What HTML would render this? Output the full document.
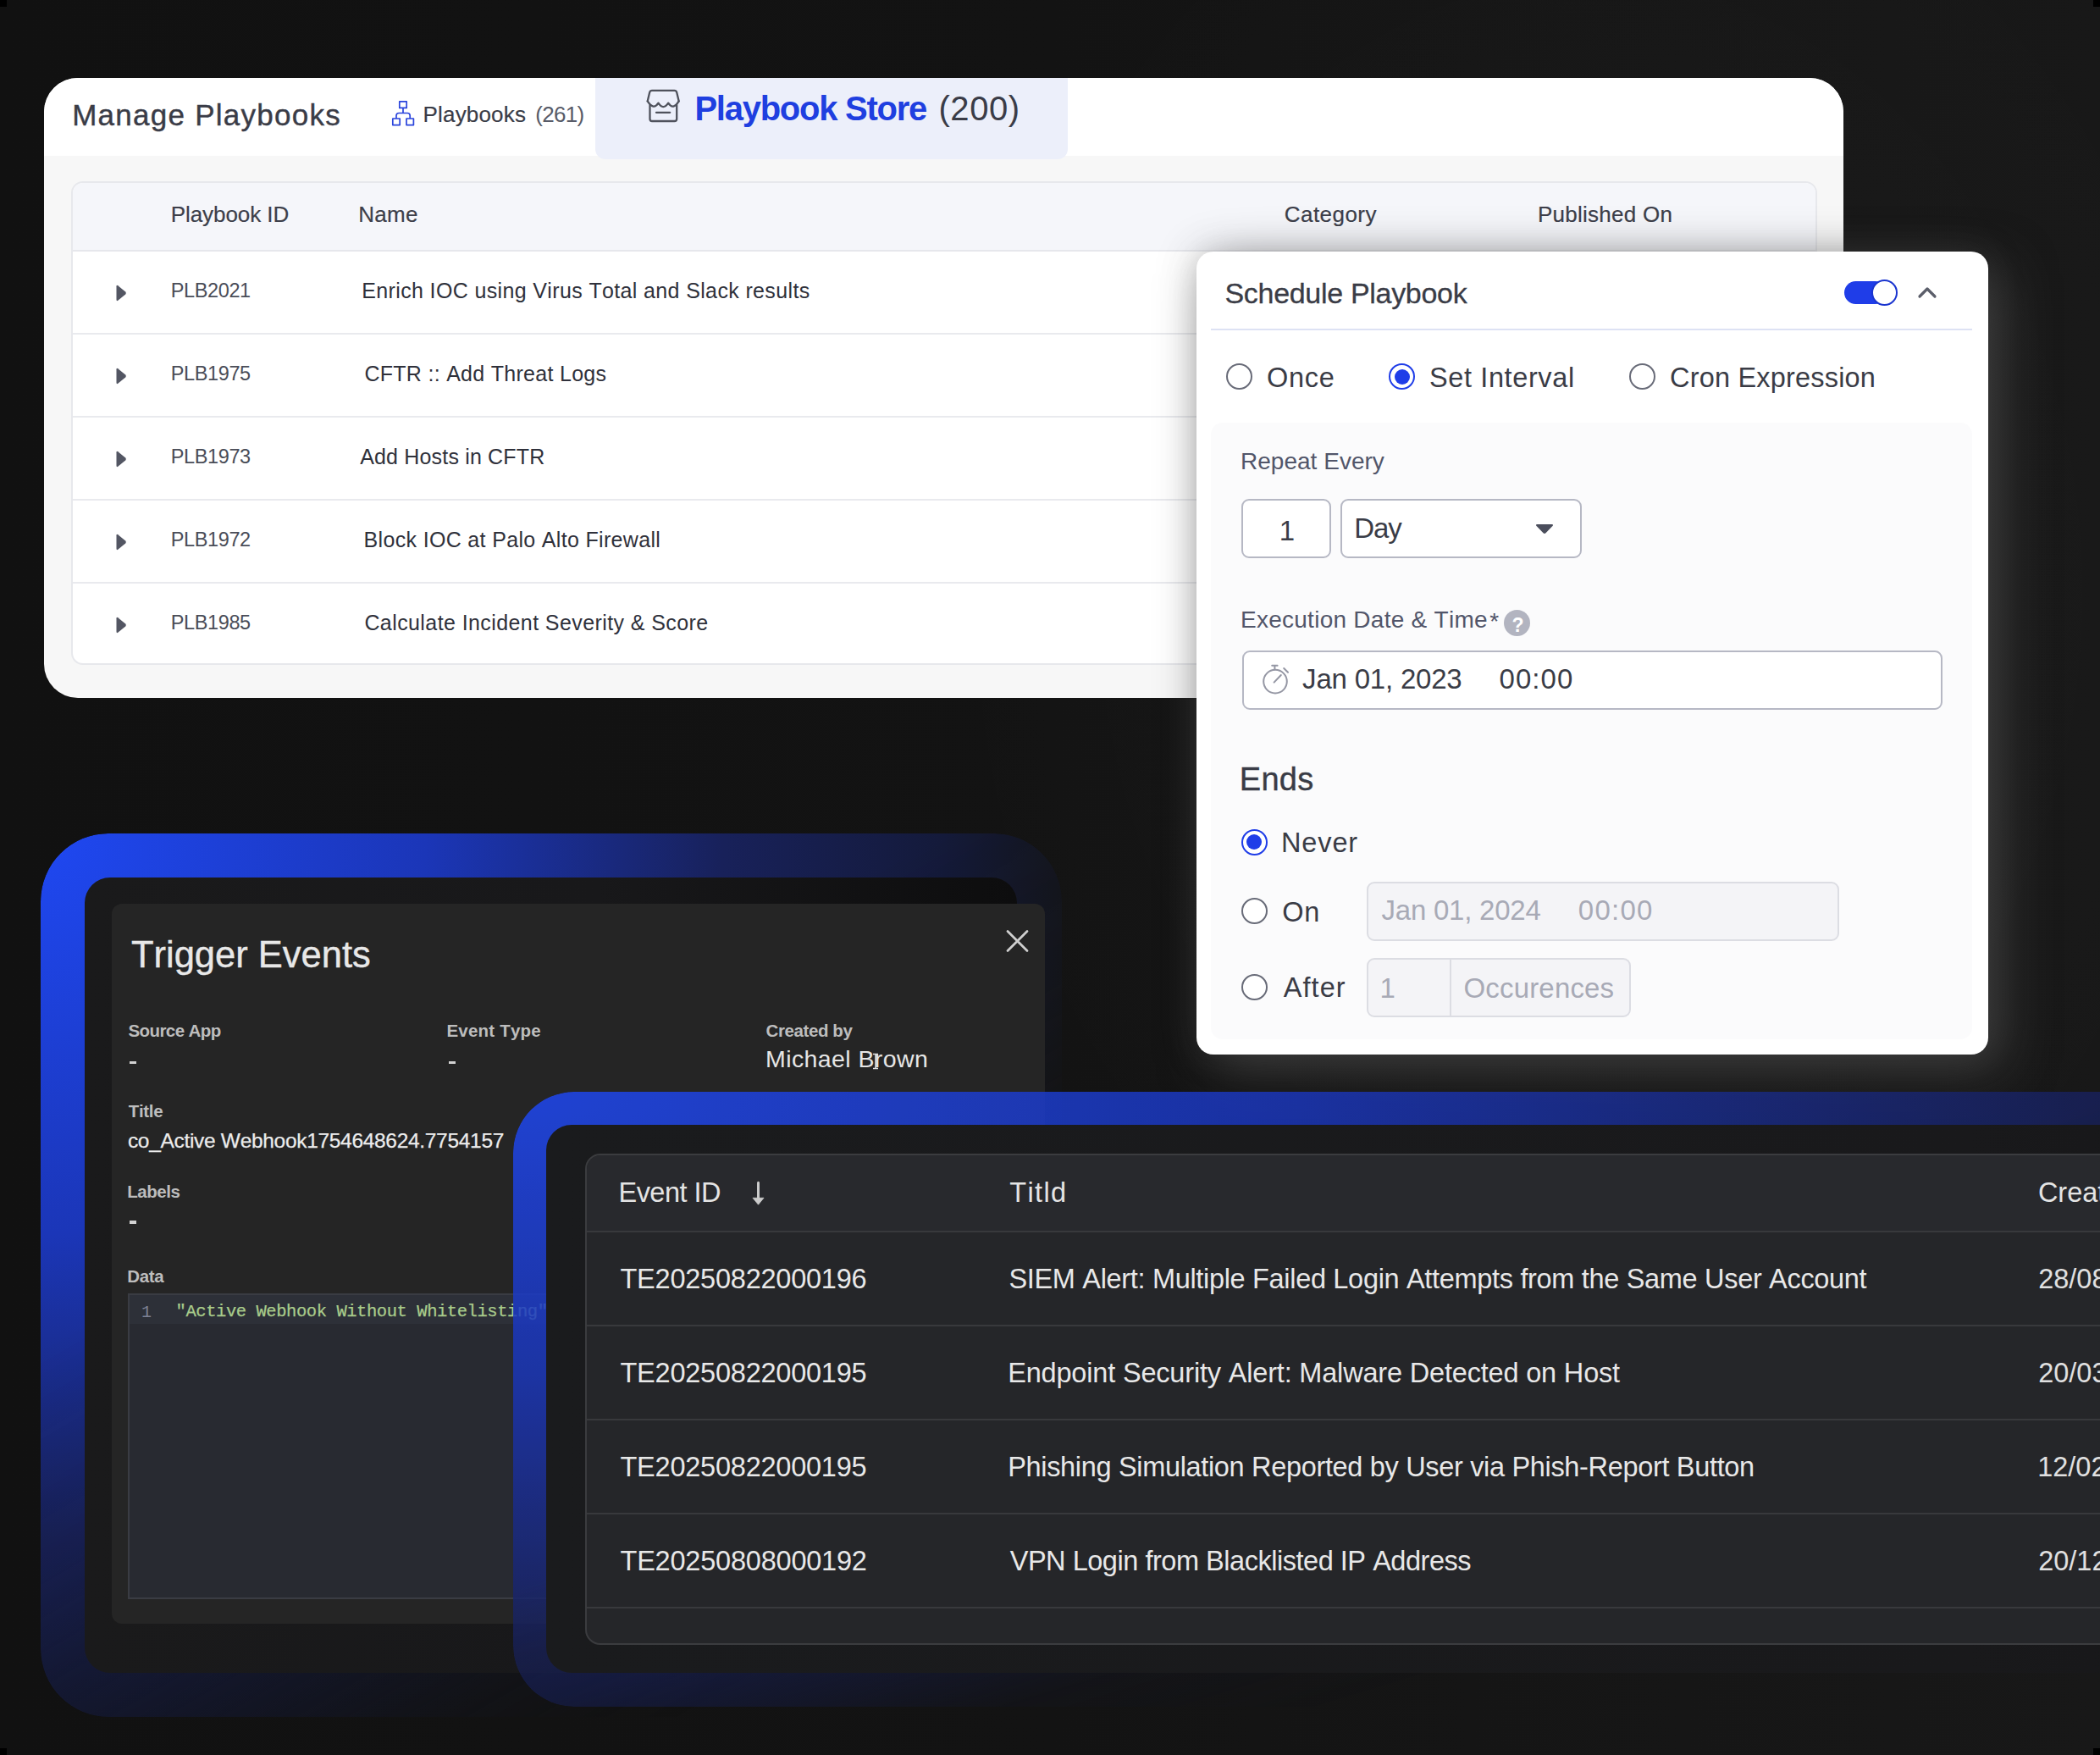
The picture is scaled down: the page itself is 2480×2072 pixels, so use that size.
<!DOCTYPE html>
<html><head><meta charset="utf-8">
<style>
*{margin:0;padding:0;box-sizing:border-box;}
html,body{width:2480px;height:2072px;overflow:hidden;}
body{position:relative;background:#131313;font-family:"Liberation Sans",sans-serif;font-kerning:none;}
.a{position:absolute;}
.t{position:absolute;white-space:nowrap;line-height:1;font-kerning:none;}
svg{position:absolute;overflow:visible;}
</style></head><body>
<div class="a" style="left:0px;top:0px;width:2480px;height:2072px;background:linear-gradient(90deg,#111111 0%,#131313 50%,#181818 100%);"></div>
<div class="a" style="left:0;top:0;width:2480px;height:2072px;background:radial-gradient(ellipse 800px 1000px at 1880px 700px, rgba(255,255,255,0.02) 0%, rgba(255,255,255,0.01) 50%, rgba(255,255,255,0) 100%);"></div>
<div class="a" style="left:52px;top:92px;width:2125px;height:732px;border-radius:40px;background:#f7f7f7;overflow:hidden;"><div class="a" style="left:0;top:0;width:2125px;height:92px;background:#fff;"></div><div class="a" style="left:651px;top:0;width:558px;height:96px;background:#eceffa;border-radius:0 0 12px 12px;"></div></div>
<div class="a" style="left:84px;top:214px;width:2062px;height:571px;background:#fff;border:2px solid #e7e8ec;border-radius:14px;overflow:hidden;"><div class="a" style="left:0;top:0;width:2062px;height:81px;background:#f5f6fa;border-bottom:2px solid #e6e7ec;"></div><div class="a" style="left:0;top:81px;width:2062px;height:98px;border-bottom:2px solid #e9eaee;"></div><div class="a" style="left:0;top:179px;width:2062px;height:98px;border-bottom:2px solid #e9eaee;"></div><div class="a" style="left:0;top:277px;width:2062px;height:98px;border-bottom:2px solid #e9eaee;"></div><div class="a" style="left:0;top:375px;width:2062px;height:98px;border-bottom:2px solid #e9eaee;"></div></div>
<div class="t" style="left:85.2px;top:117.8px;font-size:35px;color:#3a3c47;font-weight:400;letter-spacing:1.26px;font-family:'Liberation Sans',sans-serif;-webkit-text-stroke:0.4px #3a3c47;">Manage Playbooks</div>
<svg style="left:462px;top:118px" width="28" height="32" viewBox="0 0 28 32"><g fill="none" stroke="#2a44dc" stroke-width="1.7" stroke-linejoin="round"><rect x="9.8" y="1.8" width="8.4" height="7.6"/><rect x="1.8" y="22" width="8.4" height="7.6"/><rect x="18" y="22" width="8.4" height="7.6"/><path d="M14 9.4V15.5M6 22V18.6Q6 15.5 9.1 15.5H19.1Q22.2 15.5 22.2 18.6V22"/></g></svg>
<div class="t" style="left:499.6px;top:121.9px;font-size:26px;color:#3a3c47;font-weight:400;letter-spacing:0.17px;font-family:'Liberation Sans',sans-serif;-webkit-text-stroke:0.2px #3a3c47;">Playbooks</div>
<div class="t" style="left:632.2px;top:121.9px;font-size:26px;color:#585b68;font-weight:400;letter-spacing:-0.68px;font-family:'Liberation Sans',sans-serif;">(261)</div>
<svg style="left:762px;top:104px" width="44" height="44" viewBox="0 0 44 44"><g fill="none" stroke="#4f525c" stroke-width="2.3" stroke-linecap="round" stroke-linejoin="round"><path d="M2.7 15.4L5.2 5Q5.8 2.8 8 2.8H34.4Q36.6 2.8 37.2 5L39.7 15.4"/><path d="M2.7 15.4Q9.8 26.5 15.5 17.7Q21.3 26.5 27.2 17.7Q33 26.5 39.7 15.4"/><path d="M5.5 20.2V36.5Q5.5 39 8 39H34.5Q37.2 39 37.2 36.5V20.2"/><path d="M13 28.8H29.2"/></g></svg>
<div class="t" style="left:820.4px;top:108.3px;font-size:40px;color:#1f3fe0;font-weight:700;letter-spacing:-1.26px;font-family:'Liberation Sans',sans-serif;">Playbook Store</div>
<div class="t" style="left:1108.5px;top:108.3px;font-size:40px;color:#3a3c47;font-weight:400;letter-spacing:0.54px;font-family:'Liberation Sans',sans-serif;">(200)</div>
<div class="t" style="left:201.7px;top:239.8px;font-size:26px;color:#3d3f4a;font-weight:400;letter-spacing:-0.07px;font-family:'Liberation Sans',sans-serif;-webkit-text-stroke:0.2px #3d3f4a;">Playbook ID</div>
<div class="t" style="left:423.2px;top:239.8px;font-size:26px;color:#3d3f4a;font-weight:400;letter-spacing:0.28px;font-family:'Liberation Sans',sans-serif;-webkit-text-stroke:0.2px #3d3f4a;">Name</div>
<div class="t" style="left:1516.8px;top:239.8px;font-size:26px;color:#3d3f4a;font-weight:400;letter-spacing:0.45px;font-family:'Liberation Sans',sans-serif;-webkit-text-stroke:0.2px #3d3f4a;">Category</div>
<div class="t" style="left:1816.0px;top:239.8px;font-size:26px;color:#3d3f4a;font-weight:400;letter-spacing:0.25px;font-family:'Liberation Sans',sans-serif;-webkit-text-stroke:0.2px #3d3f4a;">Published On</div>
<svg style="left:135px;top:335.2px" width="16" height="22" viewBox="0 0 16 22"><path d="M2.5 3.2Q2.5 1 4.3 2.3L13.2 9.6Q14.6 11 13.2 12.4L4.3 19.7Q2.5 21 2.5 18.8Z" fill="#535663"/></svg>
<div class="t" style="left:201.8px;top:331.8px;font-size:23.5px;color:#4a4d58;font-weight:400;letter-spacing:-0.39px;font-family:'Liberation Sans',sans-serif;">PLB2021</div>
<div class="t" style="left:427.3px;top:330.6px;font-size:25px;color:#2f313b;font-weight:400;letter-spacing:0.36px;font-family:'Liberation Sans',sans-serif;">Enrich IOC using Virus Total and Slack results</div>
<svg style="left:135px;top:433.2px" width="16" height="22" viewBox="0 0 16 22"><path d="M2.5 3.2Q2.5 1 4.3 2.3L13.2 9.6Q14.6 11 13.2 12.4L4.3 19.7Q2.5 21 2.5 18.8Z" fill="#535663"/></svg>
<div class="t" style="left:201.8px;top:429.8px;font-size:23.5px;color:#4a4d58;font-weight:400;letter-spacing:-0.39px;font-family:'Liberation Sans',sans-serif;">PLB1975</div>
<div class="t" style="left:430.4px;top:428.6px;font-size:25px;color:#2f313b;font-weight:400;letter-spacing:0.29px;font-family:'Liberation Sans',sans-serif;">CFTR :: Add Threat Logs</div>
<svg style="left:135px;top:531.2px" width="16" height="22" viewBox="0 0 16 22"><path d="M2.5 3.2Q2.5 1 4.3 2.3L13.2 9.6Q14.6 11 13.2 12.4L4.3 19.7Q2.5 21 2.5 18.8Z" fill="#535663"/></svg>
<div class="t" style="left:201.8px;top:527.8px;font-size:23.5px;color:#4a4d58;font-weight:400;letter-spacing:-0.39px;font-family:'Liberation Sans',sans-serif;">PLB1973</div>
<div class="t" style="left:425.2px;top:526.5px;font-size:25px;color:#2f313b;font-weight:400;letter-spacing:0.17px;font-family:'Liberation Sans',sans-serif;">Add Hosts in CFTR</div>
<svg style="left:135px;top:629.2px" width="16" height="22" viewBox="0 0 16 22"><path d="M2.5 3.2Q2.5 1 4.3 2.3L13.2 9.6Q14.6 11 13.2 12.4L4.3 19.7Q2.5 21 2.5 18.8Z" fill="#535663"/></svg>
<div class="t" style="left:201.8px;top:625.8px;font-size:23.5px;color:#4a4d58;font-weight:400;letter-spacing:-0.39px;font-family:'Liberation Sans',sans-serif;">PLB1972</div>
<div class="t" style="left:429.6px;top:624.5px;font-size:25px;color:#2f313b;font-weight:400;letter-spacing:0.33px;font-family:'Liberation Sans',sans-serif;">Block IOC at Palo Alto Firewall</div>
<svg style="left:135px;top:727.2px" width="16" height="22" viewBox="0 0 16 22"><path d="M2.5 3.2Q2.5 1 4.3 2.3L13.2 9.6Q14.6 11 13.2 12.4L4.3 19.7Q2.5 21 2.5 18.8Z" fill="#535663"/></svg>
<div class="t" style="left:201.8px;top:723.8px;font-size:23.5px;color:#4a4d58;font-weight:400;letter-spacing:-0.39px;font-family:'Liberation Sans',sans-serif;">PLB1985</div>
<div class="t" style="left:430.4px;top:722.5px;font-size:25px;color:#2f313b;font-weight:400;letter-spacing:0.41px;font-family:'Liberation Sans',sans-serif;">Calculate Incident Severity &amp; Score</div>
<div class="a" style="left:1413px;top:297px;width:935px;height:948px;background:#fff;border-radius:20px;box-shadow:18px 18px 60px 0 rgba(72,72,72,0.7), 0 0 40px 0 rgba(72,72,72,0.25);"></div>
<div class="t" style="left:1446.5px;top:329.1px;font-size:34px;color:#3a3c46;font-weight:400;letter-spacing:-0.31px;font-family:'Liberation Sans',sans-serif;-webkit-text-stroke:0.3px #3a3c46;">Schedule Playbook</div>
<div class="a" style="left:2178px;top:332px;width:50px;height:27px;border-radius:14px;background:#1f3de8;"></div>
<div class="a" style="left:2210px;top:329.5px;width:31px;height:31px;border-radius:50%;background:#fff;border:2.4px solid #1a35cf;"></div>
<svg style="left:2264px;top:337px" width="24" height="16" viewBox="0 0 24 16"><path d="M3 13L12 4L21 13" fill="none" stroke="#5b5e6a" stroke-width="3.2" stroke-linecap="round" stroke-linejoin="round"/></svg>
<div class="a" style="left:1430px;top:387.5px;width:899px;height:2.5px;background:#dde2f4;"></div>
<div class="a" style="left:1448.0px;top:429.3px;width:31px;height:31px;border-radius:50%;border:2.4px solid #686b78;background:#fff;"></div>
<div class="t" style="left:1496.1px;top:430.0px;font-size:32.5px;color:#3a3c46;font-weight:400;letter-spacing:0.65px;font-family:'Liberation Sans',sans-serif;">Once</div>
<div class="a" style="left:1640.0px;top:429.3px;width:31px;height:31px;border-radius:50%;border:2.6px solid #1f3de8;background:#fff;"></div>
<div class="a" style="left:1646.5px;top:435.8px;width:18px;height:18px;border-radius:50%;background:#1f3de8;"></div>
<div class="t" style="left:1688.0px;top:430.0px;font-size:32.5px;color:#3a3c46;font-weight:400;letter-spacing:0.61px;font-family:'Liberation Sans',sans-serif;">Set Interval</div>
<div class="a" style="left:1924.0px;top:429.3px;width:31px;height:31px;border-radius:50%;border:2.4px solid #686b78;background:#fff;"></div>
<div class="t" style="left:1972.0px;top:430.0px;font-size:32.5px;color:#3a3c46;font-weight:400;letter-spacing:0.19px;font-family:'Liberation Sans',sans-serif;">Cron Expression</div>
<div class="a" style="left:1430px;top:499px;width:899px;height:728px;background:#fbfbfc;border-radius:14px;"></div>
<div class="t" style="left:1465.0px;top:531.4px;font-size:28px;color:#52566a;font-weight:400;letter-spacing:0.02px;font-family:'Liberation Sans',sans-serif;">Repeat Every</div>
<div class="a" style="left:1466.2px;top:589.1px;width:106.2px;height:70.2px;background:#fff;border:2.2px solid #b6b8c4;border-radius:9px;"></div>
<div class="t" style="left:1510.8px;top:609.8px;font-size:33px;color:#3a3c46;font-weight:400;letter-spacing:0.00px;font-family:'Liberation Sans',sans-serif;">1</div>
<div class="a" style="left:1582.5px;top:589.1px;width:285.5px;height:70.2px;background:#fff;border:2.2px solid #b6b8c4;border-radius:9px;"></div>
<div class="t" style="left:1599.2px;top:606.8px;font-size:33px;color:#3a3c46;font-weight:400;letter-spacing:-1.10px;font-family:'Liberation Sans',sans-serif;">Day</div>
<svg style="left:1812px;top:616px" width="24" height="16" viewBox="0 0 24 16"><path d="M3.5 3H20.5Q23 3 21.5 5L13.5 13.2Q12 14.6 10.5 13.2L2.5 5Q1 3 3.5 3Z" fill="#4b4e5c"/></svg>
<div class="t" style="left:1465.0px;top:717.9px;font-size:28px;color:#52566a;font-weight:400;letter-spacing:0.26px;font-family:'Liberation Sans',sans-serif;">Execution Date &amp; Time</div>
<div class="t" style="left:1759.2px;top:720.2px;font-size:28px;color:#52566a;font-weight:400;letter-spacing:0.00px;font-family:'Liberation Sans',sans-serif;">*</div>
<div class="a" style="left:1776px;top:720.2px;width:31.2px;height:31.2px;border-radius:50%;background:#b2b4c0;"></div>
<div class="t" style="left:1785.5px;top:726.5px;font-size:23px;color:#ffffff;font-weight:700;letter-spacing:0.00px;font-family:'Liberation Sans',sans-serif;">?</div>
<div class="a" style="left:1466.7px;top:767.7px;width:827.1px;height:70.3px;background:#fff;border:2.2px solid #b6b8c4;border-radius:9px;"></div>
<svg style="left:1486px;top:782px" width="40" height="42" viewBox="0 0 40 42"><g fill="none" stroke="#9597a4" stroke-width="2" stroke-linecap="round"><circle cx="20" cy="22.6" r="13.8"/><path d="M16.2 3.8H22.6M19.4 3.8V8.2"/><path d="M30.2 7L35 11.8"/><path d="M18.6 23.6L26.8 15"/></g></svg>
<div class="t" style="left:1538.1px;top:785.1px;font-size:33px;color:#3a3c46;font-weight:400;letter-spacing:-0.20px;font-family:'Liberation Sans',sans-serif;">Jan 01, 2023</div>
<div class="t" style="left:1770.5px;top:785.1px;font-size:33px;color:#3a3c46;font-weight:400;letter-spacing:1.07px;font-family:'Liberation Sans',sans-serif;">00:00</div>
<div class="t" style="left:1463.7px;top:900.6px;font-size:38px;color:#3a3c46;font-weight:400;letter-spacing:0.35px;font-family:'Liberation Sans',sans-serif;-webkit-text-stroke:0.4px #3a3c46;">Ends</div>
<div class="a" style="left:1465.8px;top:978.7px;width:31px;height:31px;border-radius:50%;border:2.6px solid #1f3de8;background:#fff;"></div>
<div class="a" style="left:1472.3px;top:985.2px;width:18px;height:18px;border-radius:50%;background:#1f3de8;"></div>
<div class="t" style="left:1513.0px;top:979.1px;font-size:32.5px;color:#3a3c46;font-weight:400;letter-spacing:0.86px;font-family:'Liberation Sans',sans-serif;">Never</div>
<div class="a" style="left:1465.8px;top:1060.2px;width:31px;height:31px;border-radius:50%;border:2.4px solid #686b78;background:#fff;"></div>
<div class="t" style="left:1514.2px;top:1061.0px;font-size:32.5px;color:#3a3c46;font-weight:400;letter-spacing:0.75px;font-family:'Liberation Sans',sans-serif;">On</div>
<div class="a" style="left:1614px;top:1041px;width:558px;height:69.5px;background:#f4f4f7;border:2.2px solid #dcdde3;border-radius:9px;"></div>
<div class="t" style="left:1631.5px;top:1058.0px;font-size:33px;color:#a8aab6;font-weight:400;letter-spacing:-0.23px;font-family:'Liberation Sans',sans-serif;">Jan 01, 2024</div>
<div class="t" style="left:1863.8px;top:1058.0px;font-size:33px;color:#a8aab6;font-weight:400;letter-spacing:1.25px;font-family:'Liberation Sans',sans-serif;">00:00</div>
<div class="a" style="left:1465.8px;top:1150.0px;width:31px;height:31px;border-radius:50%;border:2.4px solid #686b78;background:#fff;"></div>
<div class="t" style="left:1515.7px;top:1150.4px;font-size:32.5px;color:#3a3c46;font-weight:400;letter-spacing:1.07px;font-family:'Liberation Sans',sans-serif;">After</div>
<div class="a" style="left:1614px;top:1130.5px;width:312px;height:70px;background:#f4f4f7;border:2.2px solid #dcdde3;border-radius:9px;"></div>
<div class="a" style="left:1711.5px;top:1132.5px;width:2px;height:66px;background:#dcdde3;"></div>
<div class="t" style="left:1629.5px;top:1150.0px;font-size:33px;color:#a8aab6;font-weight:400;letter-spacing:0.00px;font-family:'Liberation Sans',sans-serif;">1</div>
<div class="t" style="left:1728.5px;top:1150.0px;font-size:33px;color:#a8aab6;font-weight:400;letter-spacing:0.17px;font-family:'Liberation Sans',sans-serif;">Occurences</div>
<div class="a" style="left:48px;top:984px;width:1206px;height:1043px;border-radius:80px;background:radial-gradient(ellipse 1300px 1350px at 0 0, #1f48f2 0%, #1b36b8 35%, #18215a 62%, #141a3a 82%, #141518 95%);-webkit-mask-image:linear-gradient(150deg,#000 0%,#000 35%,rgba(0,0,0,0.85) 50%,rgba(0,0,0,0.55) 62%,rgba(0,0,0,0.2) 75%,rgba(0,0,0,0) 85%);mask-image:linear-gradient(150deg,#000 0%,#000 35%,rgba(0,0,0,0.85) 50%,rgba(0,0,0,0.55) 62%,rgba(0,0,0,0.2) 75%,rgba(0,0,0,0) 85%);"></div>
<div class="a" style="left:100px;top:1036px;width:1101px;height:939px;border-radius:30px;background:linear-gradient(90deg,#1a1a1b 0%,#18181a 55%,#0d0d0e 100%);"></div>
<div class="a" style="left:132px;top:1067px;width:1102px;height:850px;border-radius:12px;background:#252525;"></div>
<div class="t" style="left:155.0px;top:1106.3px;font-size:43.5px;color:#e8e8e8;font-weight:400;letter-spacing:-0.01px;font-family:'Liberation Sans',sans-serif;-webkit-text-stroke:0.4px #e8e8e8;">Trigger Events</div>
<svg style="left:1186px;top:1096px" width="30" height="30" viewBox="0 0 30 30"><path d="M4 3.5L27 26.5M27 3.5L4 26.5" fill="none" stroke="#cfcfcf" stroke-width="2.8" stroke-linecap="round"/></svg>
<div class="t" style="left:151.4px;top:1207.4px;font-size:20.5px;color:#bdbdbd;font-weight:700;letter-spacing:-0.57px;font-family:'Liberation Sans',sans-serif;-webkit-text-stroke:0px;">Source App</div>
<div class="a" style="left:152.6px;top:1252.6px;width:8px;height:3.4px;background:#d2d2d2;"></div>
<div class="t" style="left:527.5px;top:1207.4px;font-size:20.5px;color:#bdbdbd;font-weight:700;letter-spacing:0.20px;font-family:'Liberation Sans',sans-serif;-webkit-text-stroke:0px;">Event Type</div>
<div class="a" style="left:529.5px;top:1252.6px;width:8px;height:3.4px;background:#d2d2d2;"></div>
<div class="t" style="left:904.5px;top:1207.4px;font-size:20.5px;color:#bdbdbd;font-weight:700;letter-spacing:-0.40px;font-family:'Liberation Sans',sans-serif;-webkit-text-stroke:0px;">Created by</div>
<div class="t" style="left:904.0px;top:1235.8px;font-size:28.5px;color:#e6e6e6;font-weight:400;letter-spacing:0.41px;font-family:'Liberation Sans',sans-serif;">Michael Brown</div>
<svg style="left:1029px;top:1243px" width="10" height="20" viewBox="0 0 10 20"><path d="M2 1.5H8M5 1.5V18.5M2 18.5H8" fill="none" stroke="#e0e0e0" stroke-width="1.6"/></svg>
<div class="t" style="left:151.7px;top:1301.9px;font-size:20.5px;color:#bdbdbd;font-weight:700;letter-spacing:-0.31px;font-family:'Liberation Sans',sans-serif;-webkit-text-stroke:0px;">Title</div>
<div class="t" style="left:150.9px;top:1334.7px;font-size:24.5px;color:#ececec;font-weight:400;letter-spacing:-0.31px;font-family:'Liberation Sans',sans-serif;-webkit-text-stroke:0.25px #ececec;">co_Active Webhook1754648624.7754157</div>
<div class="t" style="left:150.2px;top:1397.2px;font-size:20.5px;color:#bdbdbd;font-weight:700;letter-spacing:-0.43px;font-family:'Liberation Sans',sans-serif;-webkit-text-stroke:0px;">Labels</div>
<div class="a" style="left:152.6px;top:1441.2px;width:8px;height:3.4px;background:#d2d2d2;"></div>
<div class="t" style="left:150.2px;top:1497.1px;font-size:20.5px;color:#bdbdbd;font-weight:700;letter-spacing:-0.35px;font-family:'Liberation Sans',sans-serif;-webkit-text-stroke:0px;">Data</div>
<div class="a" style="left:151.4px;top:1527px;width:520px;height:361px;background:#282a31;border:2px solid #3a3c43;border-right:none;"></div>
<div class="a" style="left:153.4px;top:1529px;width:518px;height:34px;background:#2d3038;"></div>
<div class="t" style="left:167.1px;top:1539.8px;font-size:20px;color:#7c8194;font-weight:400;letter-spacing:0.00px;font-family:'Liberation Mono',monospace;">1</div>
<div class="t" style="left:207.6px;top:1539.4px;font-size:20.5px;color:#a9cc8b;font-weight:400;letter-spacing:-0.44px;font-family:'Liberation Mono',monospace;-webkit-text-stroke:0.25px #a9cc8b;">"Active Webhook Without Whitelisting"</div>
<div class="a" style="left:606px;top:1288.5px;width:2400px;height:726px;border-radius:72px;opacity:0.85;background:radial-gradient(ellipse 3100px 1100px at 0 0, #1f48f2 0%, #1b36b8 30%, #18215a 60%, #131a40 77%, #141518 100%);-webkit-mask-image:linear-gradient(163deg,#000 0%,#000 40%,rgba(0,0,0,0.75) 50%,rgba(0,0,0,0.45) 56%,rgba(0,0,0,0.1) 62%,rgba(0,0,0,0) 70%);mask-image:linear-gradient(163deg,#000 0%,#000 40%,rgba(0,0,0,0.75) 50%,rgba(0,0,0,0.45) 56%,rgba(0,0,0,0.1) 62%,rgba(0,0,0,0) 70%);"></div>
<div class="a" style="left:645px;top:1327.5px;width:2400px;height:647.5px;border-radius:30px;background:linear-gradient(90deg,#1a1b1d 0%,#19191b 70%,#141416 100%);"></div>
<div class="a" style="left:690.5px;top:1362px;width:1850px;height:580px;border-radius:18px;background:#252629;border:2px solid #3b3c3f;overflow:hidden;"><div class="a" style="left:0;top:0;width:1850px;height:91px;background:#28292d;border-bottom:2px solid #38393c;"></div><div class="a" style="left:0;top:91.0px;width:1850px;height:111px;border-bottom:2px solid #38393c;"></div><div class="a" style="left:0;top:201.9px;width:1850px;height:111px;border-bottom:2px solid #38393c;"></div><div class="a" style="left:0;top:312.8px;width:1850px;height:111px;border-bottom:2px solid #38393c;"></div><div class="a" style="left:0;top:423.7px;width:1850px;height:111px;border-bottom:2px solid #38393c;"></div></div>
<div class="t" style="left:730.5px;top:1391.9px;font-size:32.5px;color:#e4e4e4;font-weight:400;letter-spacing:-0.54px;font-family:'Liberation Sans',sans-serif;">Event ID</div>
<svg style="left:884px;top:1393px" width="22" height="32" viewBox="0 0 22 32"><path d="M11.5 3.2V22" fill="none" stroke="#cbcbcb" stroke-width="3" stroke-linecap="round"/><path d="M5 21.3H18L11.5 29.2Z" fill="#cbcbcb" stroke="#cbcbcb" stroke-width="0.8" stroke-linejoin="round"/></svg>
<div class="t" style="left:1192.2px;top:1391.9px;font-size:32.5px;color:#e4e4e4;font-weight:400;letter-spacing:1.39px;font-family:'Liberation Sans',sans-serif;">Titld</div>
<div class="t" style="left:2406.9px;top:1391.9px;font-size:32.5px;color:#e4e4e4;font-weight:400;letter-spacing:0.00px;font-family:'Liberation Sans',sans-serif;">Creat</div>
<div class="t" style="left:732.5px;top:1494.4px;font-size:32.5px;color:#e8e8e8;font-weight:400;letter-spacing:-0.23px;font-family:'Liberation Sans',sans-serif;">TE20250822000196</div>
<div class="t" style="left:1191.4px;top:1494.4px;font-size:32.5px;color:#e8e8e8;font-weight:400;letter-spacing:-0.32px;font-family:'Liberation Sans',sans-serif;">SIEM Alert: Multiple Failed Login Attempts from the Same User Account</div>
<div class="t" style="left:2407.2px;top:1494.4px;font-size:32.5px;color:#e0e0e0;font-weight:400;letter-spacing:0.00px;font-family:'Liberation Sans',sans-serif;">28/08</div>
<div class="t" style="left:732.5px;top:1605.3px;font-size:32.5px;color:#e8e8e8;font-weight:400;letter-spacing:-0.23px;font-family:'Liberation Sans',sans-serif;">TE20250822000195</div>
<div class="t" style="left:1190.2px;top:1605.3px;font-size:32.5px;color:#e8e8e8;font-weight:400;letter-spacing:-0.18px;font-family:'Liberation Sans',sans-serif;">Endpoint Security Alert: Malware Detected on Host</div>
<div class="t" style="left:2407.2px;top:1605.3px;font-size:32.5px;color:#e0e0e0;font-weight:400;letter-spacing:0.00px;font-family:'Liberation Sans',sans-serif;">20/03</div>
<div class="t" style="left:732.5px;top:1716.2px;font-size:32.5px;color:#e8e8e8;font-weight:400;letter-spacing:-0.23px;font-family:'Liberation Sans',sans-serif;">TE20250822000195</div>
<div class="t" style="left:1190.2px;top:1716.2px;font-size:32.5px;color:#e8e8e8;font-weight:400;letter-spacing:-0.33px;font-family:'Liberation Sans',sans-serif;">Phishing Simulation Reported by User via Phish-Report Button</div>
<div class="t" style="left:2406.2px;top:1716.2px;font-size:32.5px;color:#e0e0e0;font-weight:400;letter-spacing:0.00px;font-family:'Liberation Sans',sans-serif;">12/02</div>
<div class="t" style="left:732.5px;top:1827.1px;font-size:32.5px;color:#e8e8e8;font-weight:400;letter-spacing:-0.21px;font-family:'Liberation Sans',sans-serif;">TE20250808000192</div>
<div class="t" style="left:1192.7px;top:1827.1px;font-size:32.5px;color:#e8e8e8;font-weight:400;letter-spacing:-0.47px;font-family:'Liberation Sans',sans-serif;">VPN Login from Blacklisted IP Address</div>
<div class="t" style="left:2407.2px;top:1827.1px;font-size:32.5px;color:#e0e0e0;font-weight:400;letter-spacing:0.00px;font-family:'Liberation Sans',sans-serif;">20/12</div>
<div class="a" style="left:0px;top:0px;width:8px;height:8px;background:#000;"></div>
<div class="a" style="left:2472px;top:0px;width:8px;height:8px;background:#000;"></div>
<div class="a" style="left:0px;top:2064px;width:8px;height:8px;background:#000;"></div>
<div class="a" style="left:2472px;top:2064px;width:8px;height:8px;background:#000;"></div>
</body></html>
